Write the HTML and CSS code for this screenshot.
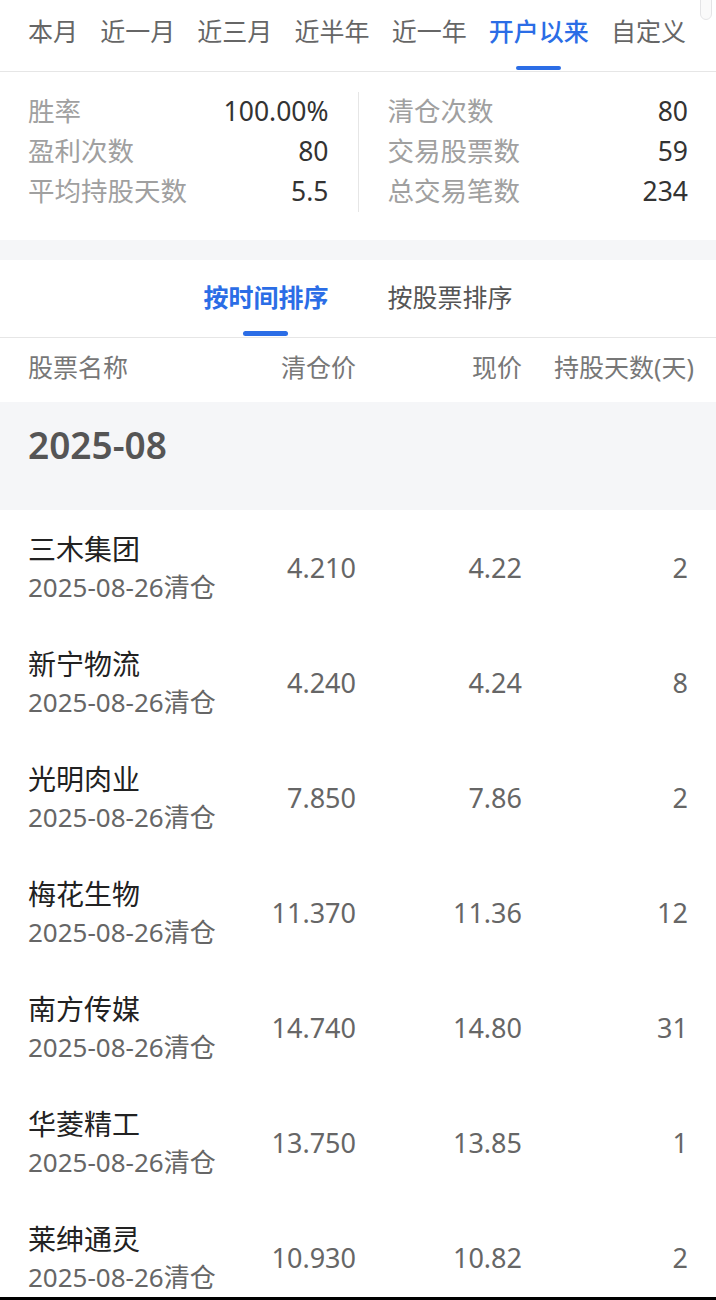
FILE: index.html
```html
<!DOCTYPE html>
<html>
<head>
    <title>清仓记录</title>
    <meta charset="utf-8">
    <link rel="stylesheet" href="styles.css">
</head>

<body>
  <div class="scroll-thumb"></div>

  <nav class="period-tabs">
    <div class="period-tab"><span>本月</span></div>
    <div class="period-tab"><span>近一月</span></div>
    <div class="period-tab"><span>近三月</span></div>
    <div class="period-tab"><span>近半年</span></div>
    <div class="period-tab"><span>近一年</span></div>
    <div class="period-tab active"><span>开户以来</span><i class="bar"></i></div>
    <div class="period-tab"><span>自定义</span></div>
  </nav>

  <section class="stats">
    <div class="stats-col">
      <div class="stat"><span class="label">胜率</span><span class="value">100.00%</span></div>
      <div class="stat"><span class="label">盈利次数</span><span class="value">80</span></div>
      <div class="stat"><span class="label">平均持股天数</span><span class="value">5.5</span></div>
    </div>
    <div class="stats-divider"></div>
    <div class="stats-col">
      <div class="stat"><span class="label">清仓次数</span><span class="value">80</span></div>
      <div class="stat"><span class="label">交易股票数</span><span class="value">59</span></div>
      <div class="stat"><span class="label">总交易笔数</span><span class="value">234</span></div>
    </div>
  </section>

  <div class="gap-band"></div>

  <nav class="sort-tabs">
    <div class="sort-tab active"><span>按时间排序</span><i class="bar"></i></div>
    <div class="sort-tab"><span>按股票排序</span></div>
  </nav>

  <div class="table-head">
    <span>股票名称</span>
    <span class="num">清仓价</span>
    <span class="num">现价</span>
    <span class="num last">持股天数(天)</span>
  </div>

  <div class="month">2025-08</div>

  <div id="rows"></div>

  <div class="bottom-edge"></div>

  <script>
    var rows = [
      ["三木集团", "4.210", "4.22", "2"],
      ["新宁物流", "4.240", "4.24", "8"],
      ["光明肉业", "7.850", "7.86", "2"],
      ["梅花生物", "11.370", "11.36", "12"],
      ["南方传媒", "14.740", "14.80", "31"],
      ["华菱精工", "13.750", "13.85", "1"],
      ["莱绅通灵", "10.930", "10.82", "2"]
    ];
    var strHTML = "";
    for (var i = 0; i < rows.length; i++) {
      strHTML += "<div class='row'><div class='stock'><div class='name'>" + rows[i][0] +
        "</div><div class='date'>2025-08-26清仓</div></div>" +
        "<span class='num'>" + rows[i][1] + "</span>" +
        "<span class='num'>" + rows[i][2] + "</span>" +
        "<span class='num'>" + rows[i][3] + "</span></div>";
    }
    document.getElementById("rows").innerHTML = strHTML;
  </script>
</body>
</html>
```

FILE: styles.css
```css
body {
    margin: 0;
    background-color: white;
    font-family: "Noto Sans", "Noto Sans CJK SC", sans-serif;
    color: #333;
}

.scroll-thumb {
    position: fixed;
    top: -8px;
    right: 4px;
    width: 10px;
    height: 26px;
    border: 1px solid #e4e4e6;
    border-radius: 6px;
    background-color: #fafafa;
}

.bottom-edge {
    position: fixed;
    left: 0;
    right: 0;
    bottom: 0;
    height: 3px;
    background-color: #000;
}

/* period tabs */
.period-tabs {
    display: flex;
    justify-content: space-between;
    height: 71px;
    padding: 0 30px 0 28px;
    border-bottom: 1px solid #e6e6e6;
}

.period-tab {
    display: flex;
    flex-direction: column;
    align-items: center;
    font-size: 25px;
    line-height: 34px;
    color: #666;
}

.period-tab span {
    margin-top: 14px;
}

.period-tab.active {
    color: #2b6de6;
    font-weight: 500;
}

.bar {
    display: block;
    width: 45px;
    height: 4px;
    margin-top: 18px;
    border-radius: 2px;
    background-color: #2b6de6;
}

/* summary */
.stats {
    display: grid;
    grid-template-columns: 1fr 1px 1fr;
    column-gap: 29px;
    padding: 19px 28px 29px 28px;
}

.stat {
    display: flex;
    justify-content: space-between;
    font-size: 26.5px;
    line-height: 40px;
}

.stat .label {
    color: #a0a0a0;
}

.stat .value {
    color: #333;
}

.stats-divider {
    margin-top: 1px;
    margin-bottom: -1px;
    background-color: #e6e6e6;
}

.gap-band {
    height: 20px;
    background-color: #f5f6f8;
}

/* sort tabs */
.sort-tabs {
    display: flex;
    justify-content: center;
    gap: 59px;
    height: 77px;
    border-bottom: 1px solid #e6e6e6;
}

.sort-tab {
    display: flex;
    flex-direction: column;
    align-items: center;
    font-size: 25px;
    line-height: 34px;
    color: #555;
}

.sort-tab span {
    margin-top: 20px;
}

.sort-tab.active {
    color: #2b6de6;
    font-weight: 700;
}

.sort-tab .bar {
    height: 5px;
    margin-top: 17px;
    border-radius: 3px;
}

/* table */
.table-head,
.row {
    display: grid;
    grid-template-columns: 1fr 108px 166px 166px;
    align-items: center;
    padding: 0 28px;
}

.table-head {
    height: 56px;
    padding-bottom: 8px;
    font-size: 25px;
    color: #777;
}

.table-head .last {
    margin-right: -6px;
    white-space: nowrap;
}

.num {
    text-align: right;
}

.month {
    height: 108px;
    padding-left: 28px;
    line-height: 86px;
    font-size: 37px;
    font-weight: 600;
    color: #555;
    background-color: #f5f6f8;
}

.row {
    height: 115px;
    font-size: 27px;
    color: #666;
}

.stock {
    padding-top: 1px;
}

.name {
    font-size: 28px;
    line-height: 38px;
    color: #222;
}

.date {
    font-size: 26px;
    line-height: 38px;
    color: #666;
}
```
